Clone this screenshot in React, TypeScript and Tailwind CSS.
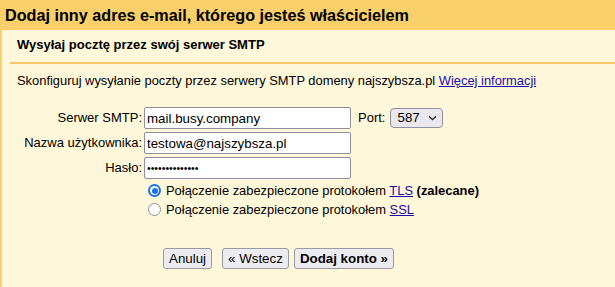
import React from 'react';

/* Formularz: dodawanie konta SMTP */

const Radio: React.FC<{ checked?: boolean }> = ({ checked }) =>
  checked ? (
    <span className="w-[13px] h-[13px] rounded-full bg-[#1a73e8] flex items-center justify-center shrink-0">
      <span className="w-[9px] h-[9px] rounded-full bg-white flex items-center justify-center">
        <span className="w-[6px] h-[6px] rounded-full bg-[#1a73e8]" />
      </span>
    </span>
  ) : (
    <span className="w-[13px] h-[13px] rounded-full bg-white border border-[#8f8f9d] shrink-0" />
  );

const Btn: React.FC<{ children: React.ReactNode; bold?: boolean }> = ({ children, bold }) => (
  <button
    className={`h-[21px] px-[5px] bg-[#ececf0] border border-[#9a9aa6] rounded-[3px] text-[13.33px] leading-none text-black ${bold ? 'font-bold' : ''}`}
  >
    {children}
  </button>
);

const inputCls =
  'h-[22px] w-[207px] px-[2px] bg-white border border-[#8f8f9d] rounded-[2px] text-black outline-none';

export default function App() {
  return (
    <div className="w-[615px] h-[287px] overflow-hidden font-['Liberation_Sans',Arial,sans-serif] text-black">
      <div className="h-[30px] bg-[#f9cf69] pl-[5px] text-[16.2px] font-bold leading-[30px]">
        Dodaj inny adres e-mail, którego jesteś właścicielem
      </div>

      <div className="h-[257px] bg-[#fff7da] border-l-2 border-[#f9cf69] pl-[8px]">
        <div className="pl-[7px] pt-[7px] text-[13px] font-bold leading-[16px]">
          Wysyłaj pocztę przez swój serwer SMTP
        </div>
        <div className="h-[2px] bg-[#f6c76a] mt-[9px]" />

        <div className="pl-[7px] mt-[9px] text-[12.9px] leading-[16px]">
          Skonfiguruj wysyłanie poczty przez serwery SMTP domeny najszybsza.pl{' '}
          <a href="#" className="text-[#1a0dab] underline">Więcej informacji</a>
        </div>

        <div className="mt-[18px] flex flex-col gap-[3px] text-[13px]">
          <div className="flex items-center">
            <label className="w-[134px] text-right pr-[2px]">Serwer SMTP:</label>
            <input className={`${inputCls} text-[13.33px]`} defaultValue="mail.busy.company" />
            <span className="ml-[7px] mr-[5px]">Port:</span>
            <button className="h-[20px] w-[53px] pl-[6px] pr-[5px] bg-[#e9e9ed] border border-[#8f8f9d] rounded-[4px] flex items-center justify-between text-[13.33px]">
              <span>587</span>
              <svg width="9" height="6" viewBox="0 0 9 6" fill="none">
                <path d="M1 1.2 L4.5 4.6 L8 1.2" stroke="#222" strokeWidth="1.3" />
              </svg>
            </button>
          </div>
          <div className="flex items-center">
            <label className="w-[134px] text-right pr-[2px]">Nazwa użytkownika:</label>
            <input className={`${inputCls} text-[13.33px]`} defaultValue="testowa@najszybsza.pl" />
          </div>
          <div className="flex items-center">
            <label className="w-[134px] text-right pr-[2px]">Hasło:</label>
            <input type="password" className={`${inputCls} text-[10.5px]`} defaultValue="haslotestowe12" />
          </div>
        </div>

        <div className="mt-[2px] pl-[138px] text-[12.9px]">
          <div className="h-[19px] flex items-center gap-[5px]">
            <Radio checked />
            <span>
              Połączenie zabezpieczone protokołem{' '}
              <a href="#" className="text-[#1a0dab] underline">TLS</a> <b>(zalecane)</b>
            </span>
          </div>
          <div className="h-[19px] flex items-center gap-[5px]">
            <Radio />
            <span>
              Połączenie zabezpieczone protokołem{' '}
              <a href="#" className="text-[#1a0dab] underline">SSL</a>
            </span>
          </div>
        </div>

        <div className="mt-[29px] pl-[153px] flex items-center">
          <Btn>Anuluj</Btn>
          <span className="w-[10px]" />
          <Btn>« Wstecz</Btn>
          <span className="w-[5px]" />
          <Btn bold>Dodaj konto »</Btn>
        </div>
      </div>
    </div>
  );
}
